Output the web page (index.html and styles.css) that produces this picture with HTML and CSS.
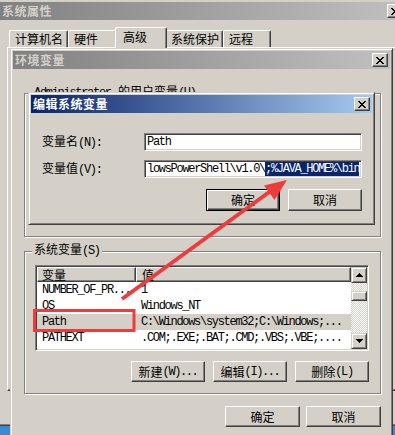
FILE: index.html
```html
<!DOCTYPE html>
<html lang="zh-CN">
<head>
<meta charset="utf-8">
<title>环境变量</title>
<link rel="stylesheet" href="styles.css">
</head>
<body>
<div class="desk">

  <div class="win win-sys">
    <div class="title title-inactive">
      <span class="title-text">系统属性</span>
      <span class="cbtn"><svg width="8" height="7" viewBox="0 0 8 7" shape-rendering="crispEdges"><path d="M0 0h2v1H0zM6 0h2v1H6zM1 1h2v1H1zM5 1h2v1H5zM2 2h4v1H2zM3 3h2v1H3zM2 4h4v1H2zM1 5h2v1H1zM5 5h2v1H5zM0 6h2v1H0zM6 6h2v1H6z"/></svg></span>
    </div>
    <div class="tabs">
      <div class="tab t1">计算机名</div>
      <div class="tab t2">硬件</div>
      <div class="tab t3 sel">高级</div>
      <div class="tab t4">系统保护</div>
      <div class="tab t5">远程</div>
    </div>
    <div class="tabpage"></div>
  </div>

  <div class="win win-env">
    <div class="title title-inactive">
      <span class="title-text">环境变量</span>
      <span class="cbtn"><svg width="8" height="7" viewBox="0 0 8 7" shape-rendering="crispEdges"><path d="M0 0h2v1H0zM6 0h2v1H6zM1 1h2v1H1zM5 1h2v1H5zM2 2h4v1H2zM3 3h2v1H3zM2 4h4v1H2zM1 5h2v1H1zM5 5h2v1H5zM0 6h2v1H0zM6 6h2v1H6z"/></svg></span>
    </div>
    <div class="env-body">
      <div class="group group-user">
        <div class="legend"><span class="m">Administrator</span> 的用户变量<span class="m">(U)</span></div>
        <div class="list list-user"></div>
        <div class="btnrow">
          <div class="btn">新建<span class="m">(N)...</span></div>
          <div class="btn">编辑<span class="m">(E)...</span></div>
          <div class="btn">删除<span class="m">(D)</span></div>
        </div>
      </div>

      <div class="group group-sys">
        <div class="legend">系统变量<span class="m">(S)</span></div>
        <div class="list">
          <div class="list-main">
            <div class="lv-head">
              <div class="hcell">变量</div>
              <div class="hcell">值</div>
            </div>
            <div class="lv-row"><span class="m">NUMBER_OF_PR...</span><span class="m">1</span></div>
            <div class="lv-row"><span class="m">OS</span><span class="m">Windows_NT</span></div>
            <div class="lv-row lv-sel"><span class="m">Path</span><span class="m">C:\Windows\system32;C:\Windows;...</span></div>
            <div class="lv-row"><span class="m">PATHEXT</span><span class="m">.COM;.EXE;.BAT;.CMD;.VBS;.VBE;....</span></div>
          </div>
          <div class="vscroll">
            <div class="sbtn"><svg width="7" height="4" viewBox="0 0 7 4" shape-rendering="crispEdges"><path d="M3 0h1v1H3zM2 1h3v1H2zM1 2h5v1H1zM0 3h7v1H0z"/></svg></div>
            <div class="track"><div class="thumb"></div></div>
            <div class="sbtn"><svg width="7" height="4" viewBox="0 0 7 4" shape-rendering="crispEdges"><path d="M0 0h7v1H0zM1 1h5v1H1zM2 2h3v1H2zM3 3h1v1H3z"/></svg></div>
          </div>
        </div>
        <div class="btnrow">
          <div class="btn">新建<span class="m">(W)...</span></div>
          <div class="btn">编辑<span class="m">(I)...</span></div>
          <div class="btn">删除<span class="m">(L)</span></div>
        </div>
      </div>

      <div class="btnrow dlg-btns">
        <div class="btn btn-wide">确定</div>
        <div class="btn btn-wide">取消</div>
      </div>
    </div>
  </div>

  <div class="win win-edit">
    <div class="title title-active">
      <span class="title-text">编辑系统变量</span>
      <span class="cbtn"><svg width="8" height="7" viewBox="0 0 8 7" shape-rendering="crispEdges"><path d="M0 0h2v1H0zM6 0h2v1H6zM1 1h2v1H1zM5 1h2v1H5zM2 2h4v1H2zM3 3h2v1H3zM2 4h4v1H2zM1 5h2v1H1zM5 5h2v1H5zM0 6h2v1H0zM6 6h2v1H6z"/></svg></span>
    </div>
    <div class="edit-body">
      <div class="fields">
        <label class="flabel">变量名<span class="m">(N):</span></label>
        <div class="field"><span class="m">Path</span></div>
        <label class="flabel">变量值<span class="m">(V):</span></label>
        <div class="field"><span class="m">lowsPowerShell\v1.0\</span><span class="m selected">;%JAVA_HOME%\bin</span></div>
      </div>
      <div class="btnrow edit-btns">
        <div class="btn btn-default">确定</div>
        <div class="btn">取消</div>
      </div>
    </div>
  </div>

  <svg class="annot" width="395" height="435" viewBox="0 0 395 435">
    <rect x="34.5" y="310.5" width="99.5" height="20" fill="none" stroke="#ee3b3b" stroke-width="3"/>
    <line x1="122" y1="299" x2="272" y2="190" stroke="#ee3b3b" stroke-width="4"/>
    <polygon points="287,180 264,185.5 274.5,200" fill="#ee3b3b"/>
  </svg>
</div>
</body>
</html>
```

FILE: styles.css
```css
* {
  box-sizing: border-box;
  margin: 0;
  padding: 0;
}

html,
body {
  width: 395px;
  height: 435px;
  overflow: hidden;
}

body {
  background: #3b8ad6;
  font-family: "Liberation Mono", "Noto Sans CJK SC", monospace;
  font-size: 12px;
  line-height: 14px;
  color: #000;
}

.desk {
  position: relative;
  width: 395px;
  height: 435px;
  overflow: hidden;
}

.m {
  font-family: "Liberation Mono", monospace;
  letter-spacing: -1.3px;
}

/* ---------- classic window frame ---------- */
.win {
  position: absolute;
  display: flex;
  flex-direction: column;
  background: #d4d0c8;
  border: 1px solid;
  border-color: #d4d0c8 #404040 #404040 #d4d0c8;
  box-shadow: inset 1px 1px #fff, inset -1px -1px #808080;
  padding: 2px;
}

.win-sys {
  left: -4px;
  top: -2px;
  width: 413px;
  height: 428px;
  padding: 3px;
}

.win-env {
  left: 10px;
  top: 48px;
  width: 383px;
  height: 400px;
}

.win-edit {
  left: 28px;
  top: 92px;
  width: 347px;
  height: 133px;
  z-index: 5;
}

.title {
  flex: none;
  height: 18px;
  display: flex;
  align-items: center;
  justify-content: space-between;
  padding: 0 2px 0 2px;
}

.title-text {
  font-family: "Noto Sans CJK SC", sans-serif;
  font-weight: bold;
  font-size: 12px;
  line-height: 14px;
  letter-spacing: 0.5px;
}

.title-inactive {
  background: linear-gradient(90deg, #808080, #c0c0c0);
  color: #d4d0c8;
}

.title-active {
  background: linear-gradient(90deg, #0a246a, #a6caf0);
  color: #fff;
}

.cbtn {
  width: 16px;
  height: 14px;
  display: flex;
  align-items: center;
  justify-content: center;
  background: #d4d0c8;
  border: 1px solid;
  border-color: #fff #404040 #404040 #fff;
  box-shadow: inset -1px -1px #808080;
}

.cbtn svg {
  fill: #000;
  display: block;
}

/* ---------- tabs ---------- */
.tabs {
  flex: none;
  display: flex;
  align-items: flex-end;
  height: 20px;
  margin-top: 7px;
  padding-left: 9px;
  position: relative;
  z-index: 1;
}

.tab {
  height: 17px;
  padding: 0 0 0 5px;
  font-family: "Noto Sans CJK SC", sans-serif;
  line-height: 16px;
  background: #d4d0c8;
  border: 1px solid;
  border-color: #fff #404040 transparent #fff;
  border-bottom: none;
  border-radius: 2px 2px 0 0;
  box-shadow: inset -1px 0 #808080;
}

.t1 { width: 59px; }
.t2 { width: 49px; }
.t3 { width: 48px; }
.t4 { width: 58px; }
.t5 { width: 48px; }

.tab.sel {
  height: 21px;
  margin: 0 -2px -1px;
  width: 52px;
  padding-left: 7px;
  line-height: 18px;
  position: relative;
  z-index: 2;
}

.tabpage {
  flex: none;
  margin-left: 7px;
  height: 344px;
  border: 1px solid;
  border-color: #fff #404040 #404040 #fff;
  box-shadow: inset -1px -1px #808080;
}

/* ---------- env window body ---------- */
.env-body {
  display: flex;
  flex-direction: column;
  padding: 24px 0 0 11px;
}

.group {
  position: relative;
  width: 357px;
  border: 1px solid #808080;
  box-shadow: inset 1px 1px #fff, 1px 1px #fff;
  display: flex;
  flex-direction: column;
  padding: 13px 11px 0 10px;
}

.group-user {
  height: 144px;
  margin-bottom: 14px;
  padding-top: 11px;
}

.group-sys {
  height: 143px;
}

.legend {
  position: absolute;
  top: -8px;
  left: 7px;
  padding: 0 2px;
  background: #d4d0c8;
  line-height: 14px;
  white-space: nowrap;
}

.list {
  flex: none;
  height: 86px;
  display: flex;
  background: #fff;
  border: 1px solid;
  border-color: #808080 #fff #fff #808080;
  box-shadow: inset 1px 1px #404040, inset -1px -1px #d4d0c8;
  padding: 1px;
  overflow: hidden;
}

.list-user {
  height: 89px;
}

.list-main {
  flex: 1;
  display: flex;
  flex-direction: column;
  overflow: hidden;
}

.lv-head {
  flex: none;
  display: grid;
  grid-template-columns: 99px 1fr;
  height: 15px;
}

.hcell {
  font-family: "Noto Sans CJK SC", sans-serif;
  line-height: 13px;
  padding-left: 4px;
  background: #d4d0c8;
  border: 1px solid;
  border-color: #fff #404040 #404040 #fff;
  box-shadow: inset -1px -1px #808080;
}

.hcell + .hcell {
  padding-left: 5px;
}

.lv-row {
  flex: none;
  display: grid;
  grid-template-columns: 99px 1fr;
  height: 16px;
  line-height: 16px;
  white-space: nowrap;
  overflow: hidden;
}

.lv-row > span {
  padding-left: 5px;
  overflow: hidden;
}

.lv-sel {
  background: #d4d0c8;
}

.vscroll {
  flex: none;
  width: 16px;
  display: flex;
  flex-direction: column;
}

.sbtn {
  flex: none;
  height: 16px;
  display: flex;
  align-items: center;
  justify-content: center;
  background: #d4d0c8;
  border: 1px solid;
  border-color: #d4d0c8 #404040 #404040 #d4d0c8;
  box-shadow: inset 1px 1px #fff, inset -1px -1px #808080;
}

.sbtn svg {
  display: block;
  fill: #000;
}

.track {
  flex: 1;
  background: repeating-conic-gradient(#d4d0c8 0 25%, #fff 0 50%) 0 0 / 2px 2px;
  padding-top: 8px;
}

.thumb {
  height: 10px;
  background: #d4d0c8;
  border: 1px solid;
  border-color: #d4d0c8 #404040 #404040 #d4d0c8;
  box-shadow: inset 1px 1px #fff, inset -1px -1px #808080;
}

/* ---------- buttons ---------- */
.btnrow {
  flex: none;
  display: flex;
  justify-content: flex-end;
  gap: 8px;
  margin-top: 10px;
}

.btn {
  width: 74px;
  height: 21px;
  display: flex;
  align-items: center;
  justify-content: center;
  font-family: "Noto Sans CJK SC", sans-serif;
  line-height: 14px;
  background: #d4d0c8;
  border: 1px solid;
  border-color: #fff #404040 #404040 #fff;
  box-shadow: inset -1px -1px #808080;
  white-space: nowrap;
}

.btn .m {
  letter-spacing: -1.4px;
}

.dlg-btns {
  width: 357px;
  margin-top: 12px;
  gap: 6px;
}

.btn-wide {
  width: 75px;
}

/* ---------- edit dialog ---------- */
.edit-body {
  display: flex;
  flex-direction: column;
  padding: 20px 0 0 11px;
}

.fields {
  display: grid;
  grid-template-columns: 102px 218px;
  grid-auto-rows: 18px;
  row-gap: 9px;
  align-items: center;
}

.flabel {
  font-family: "Noto Sans CJK SC", sans-serif;
  line-height: 14px;
}

.field {
  height: 18px;
  display: flex;
  align-items: center;
  background: #fff;
  border: 1px solid;
  border-color: #808080 #fff #fff #808080;
  box-shadow: inset 1px 1px #404040, inset -1px -1px #d4d0c8;
  padding: 0 1px 0 2px;
  white-space: nowrap;
  overflow: hidden;
  line-height: 14px;
}

.field .selected {
  background: #0a246a;
  color: #fff;
  line-height: 14px;
}

.edit-btns {
  margin-top: 11px;
  width: 320px;
  gap: 8px;
}

.edit-btns .btn {
  width: 74px;
  height: 22px;
}

.btn-default {
  border-color: #000;
  box-shadow: inset 1px 1px #fff, inset -1px -1px #404040, inset -2px -2px #808080;
}

/* ---------- annotation overlay ---------- */
.annot {
  position: absolute;
  left: 0;
  top: 0;
  z-index: 10;
  pointer-events: none;
}
```
